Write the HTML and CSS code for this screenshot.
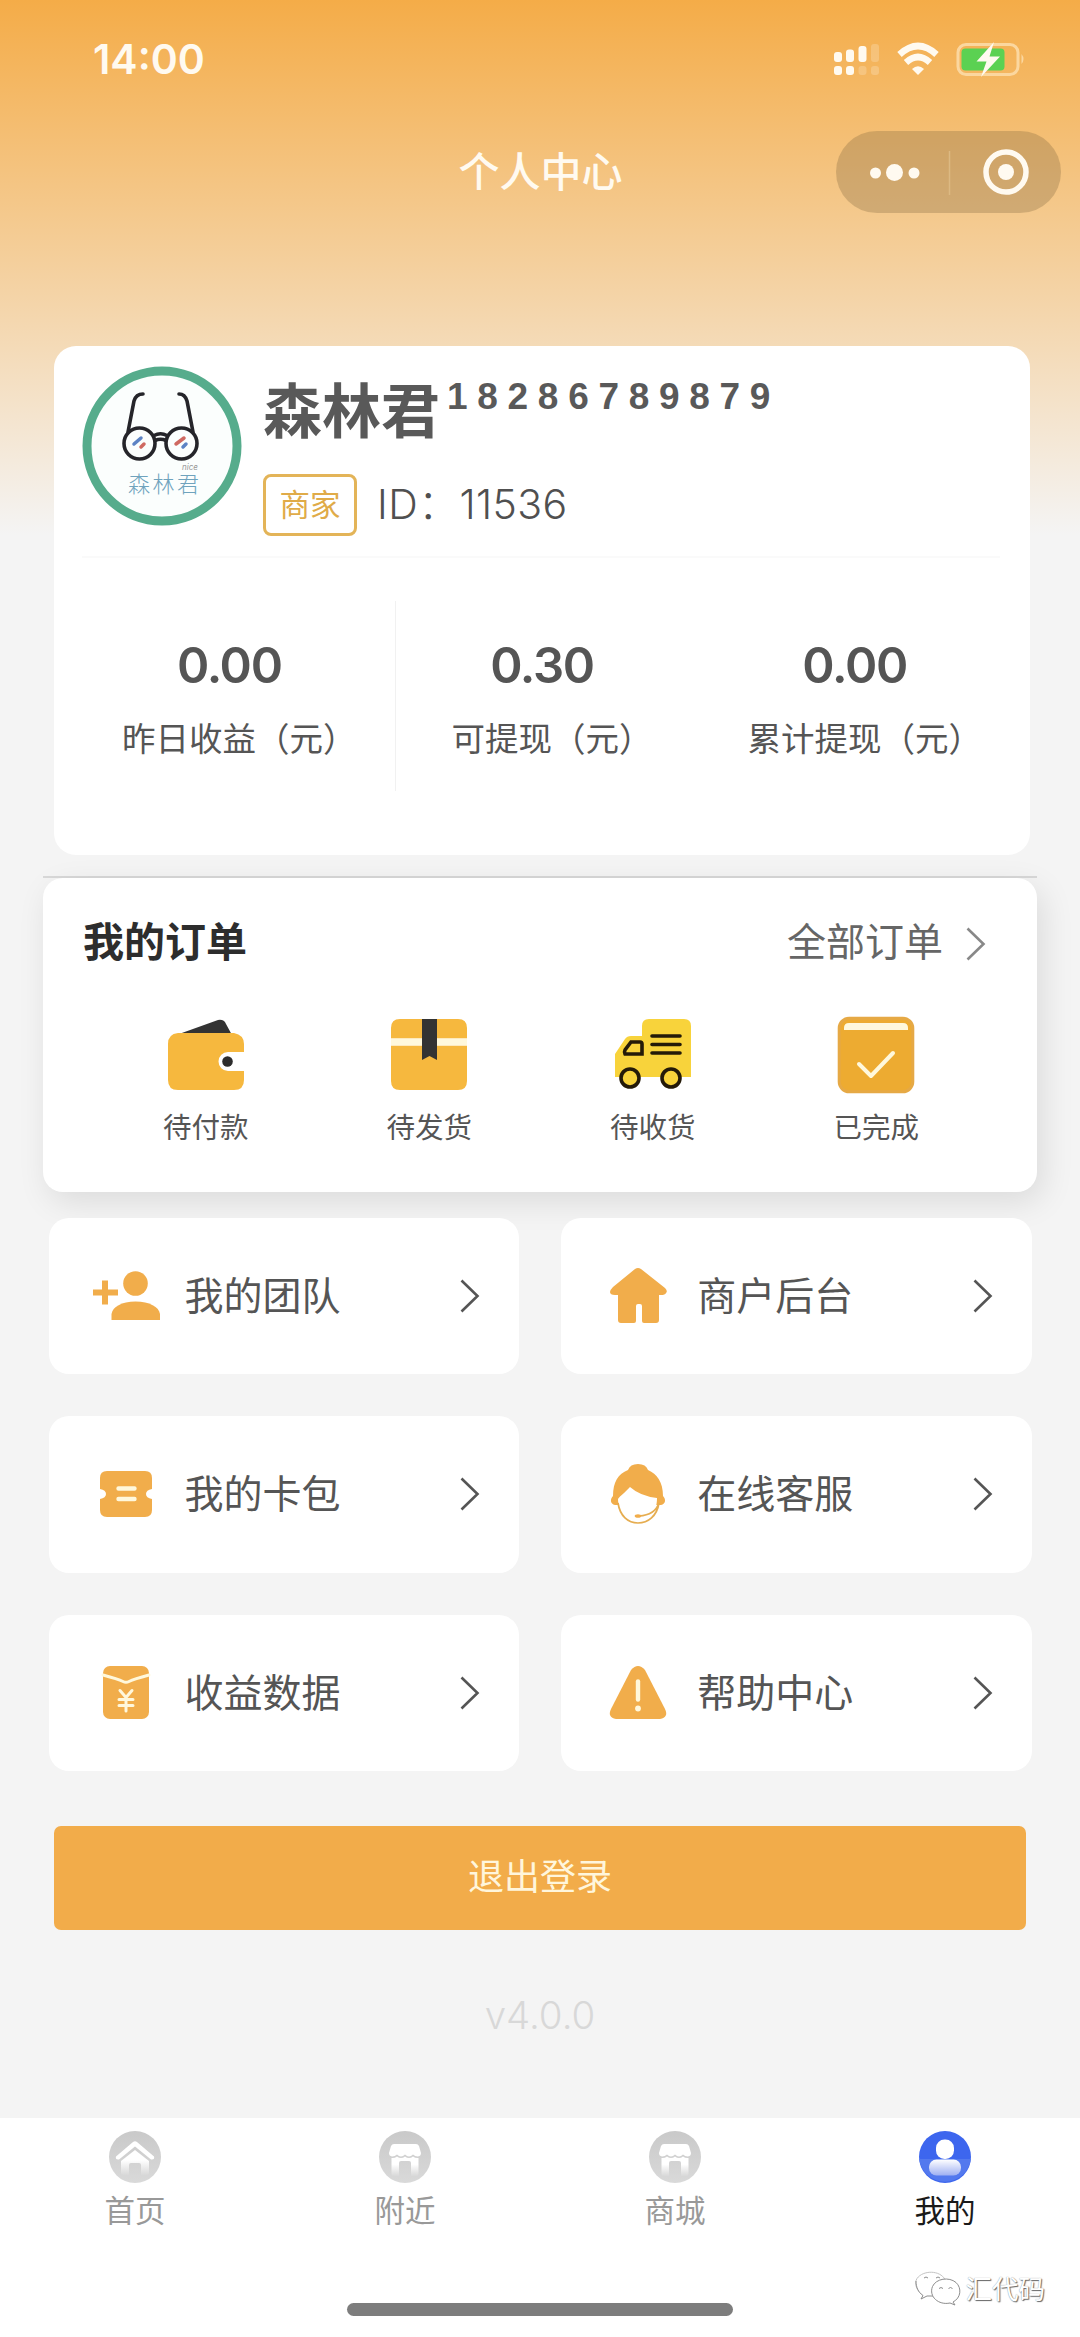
FILE: index.html
```html
<!DOCTYPE html>
<html lang="zh-CN">
<head>
<meta charset="utf-8">
<title>个人中心</title>
<link rel="stylesheet" href="styles.css">
</head>
<body>
<svg class="defs" width="0" height="0">
  <defs>
    <linearGradient id="gray" x1="0" y1="0" x2="0" y2="1"><stop offset="0" stop-color="#c9c9c9"/><stop offset="1" stop-color="#d9d9d9"/></linearGradient>
    <linearGradient id="fade" x1="0" y1="0" x2="0" y2="1"><stop offset="0.4" stop-color="#fff"/><stop offset="1" stop-color="#d8d8d8"/></linearGradient>
    <linearGradient id="bodyfade" x1="0" y1="0" x2="0" y2="1"><stop offset="0" stop-color="#fff"/><stop offset="1" stop-color="#9fb0f2"/></linearGradient>
    <symbol id="arrow" viewBox="0 0 20 34"><path d="M1.5 1.5 17.5 17 1.5 32.5" fill="none" stroke="currentColor" stroke-width="2.6"/></symbol>
    <symbol id="shop" viewBox="0 0 52 52">
      <circle cx="26" cy="26" r="26" fill="url(#gray)"/>
      <path d="M15 13h22q2 0 3 2l2 7q0 3-3 3.500-3 0-5-2-4 4-8 0-4 4-8 0-2 2-5 2-3-.5-3-3.500l2-7q1-2 3-2z" fill="#fff"/>
      <path d="M12.500 27q3 .5 5.500-1.500 4 3 8 0 4 3 8 0 2.500 2 5.500 1.500V43q0 2-2 2H32V32q0-2-2-2h-8q-2 0-2 2v13h-5.500q-2 0-2-2z" fill="url(#fade)"/>
    </symbol>
  </defs>
</svg>
<div class="page">
  <header class="status">
    <span class="time">14:00</span>
    <svg class="status-icons" width="192" height="36" viewBox="0 0 192 36">
      <g fill="#fffaf0">
        <rect x="1" y="11" width="8" height="10" rx="3"/><rect x="13" y="8.500" width="8" height="12.500" rx="3"/><rect x="25.500" y="5" width="8" height="16" rx="3"/>
        <rect x="1" y="25" width="8" height="9" rx="3"/><rect x="13" y="25" width="8" height="9" rx="3"/>
        <g opacity=".22"><rect x="38" y="3" width="8" height="18" rx="3"/><rect x="25.500" y="25" width="8" height="9" rx="3"/><rect x="38" y="25" width="8" height="9" rx="3"/></g>
        <path d="M85 34l-6-6q6-5.500 12 0z"/>
      </g>
      <path d="M66.500 13.500q18.500-17 37 0M73 21.500q12-11 24 0" fill="none" stroke="#fffaf0" stroke-width="6.500"/>
      <rect x="125" y="3.500" width="60" height="30" rx="8" fill="none" stroke="#fbd79f" stroke-width="3"/>
      <rect x="128.500" y="7.500" width="43" height="22" rx="4" fill="#5bd152"/>
      <path d="M188.500 13q4 5 0 10z" fill="#fbd79f"/>
      <path d="M161 1 143.500 20.500h10L148 36l19-20.500h-10.500z" fill="#fffaf0"/>
    </svg>
  </header>
  <nav class="nav">
    <h1 class="title">个人中心</h1>
    <div class="capsule">
      <svg width="225" height="82" viewBox="0 0 225 82">
        <g fill="#fffaf0"><circle cx="39.500" cy="42" r="5.500"/><circle cx="58.500" cy="41.500" r="8.500"/><circle cx="78" cy="42" r="5.500"/><circle cx="170" cy="41" r="8"/></g>
        <circle cx="170" cy="41" r="20" fill="none" stroke="#fffaf0" stroke-width="5.500"/>
        <path d="M113.500 20v44" stroke="#dcb983" stroke-width="1.500"/>
      </svg>
    </div>
  </nav>

  <section class="profile">
    <div class="user">
      <svg class="avatar" width="160" height="160" viewBox="0 0 160 160">
        <circle cx="80" cy="80" r="75" fill="#fbfefd" stroke="#56ac8c" stroke-width="9"/>
        <g fill="none" stroke="#25252a" stroke-width="3.600" stroke-linecap="round">
          <circle cx="57.500" cy="77.500" r="15.500"/><circle cx="99.500" cy="77.500" r="15.500"/>
          <path d="M72 69.500q6.500-3.500 13 0M73 74.500q5.500-2.500 11 0"/>
          <path d="M46 66 52 35q2-7 9-7M111 66l-6-31q-2-7-8-7"/>
        </g>
        <g fill="none" stroke-width="3.500" stroke-linecap="round"><path d="M52 78l7-6M101 81l3-3" stroke="#5c83c4"/><path d="M59 81l3-3M94 78l8-6" stroke="#cf6961"/></g>
        <text class="avatar-nice" x="100" y="104">nice</text>
        <text class="avatar-name" x="46" y="126">森林君</text>
      </svg>
      <div class="info">
        <div class="name">森林君<span class="phone">18286789879</span></div>
        <div class="meta"><span class="tag">商家</span><span class="uid">ID：11536</span></div>
      </div>
    </div>
    <div class="stats">
      <div class="stat"><b>0.00</b><span>昨日收益（元）</span></div>
      <div class="stat"><b>0.30</b><span>可提现（元）</span></div>
      <div class="stat"><b>0.00</b><span>累计提现（元）</span></div>
    </div>
  </section>

  <hr class="rule">
  <section class="orders">
    <div class="orders-head">
      <h2>我的订单</h2>
      <a class="all">全部订单<svg class="arrow" width="20" height="34"><use href="#arrow"/></svg></a>
    </div>
    <div class="order-list">
      <div class="order">
        <svg width="78" height="78" viewBox="0 0 78 78"><path d="M12 18 51 4q6-1 8 4l6 11z" fill="#333"/><path d="M11 17h56q10 2 10 11v8H61a9.500 9.500 0 0 0 0 19h16v9q0 10-10 10H11Q1 74 1 64V28q0-10 10-11z" fill="#f6b83e"/><circle cx="60.500" cy="45.500" r="5.300" fill="#2d2d2d"/></svg>
        <span>待付款</span>
      </div>
      <div class="order">
        <svg width="78" height="78" viewBox="0 0 78 78"><path d="M1 22.500V12q0-9 9-9h58q9 0 9 9v10.500zM1 29.500h76V65q0 9-9 9H10q-9 0-9-9z" fill="#f6b83e"/><path d="M1 22.500h76v7H1z" fill="#fff8dc"/><path d="M32 3h15v41l-7.500-4-7.500 4z" fill="#333"/></svg>
        <span>待发货</span>
      </div>
      <div class="order">
        <svg width="78" height="78" viewBox="0 0 78 78"><path d="M28 20V10q0-7 7-7h35q7 0 7 7v51H1V38l10-15q2-3 6-3z" fill="#f8d33b"/><g fill="none" stroke="#241a08" stroke-width="3.600" stroke-linecap="round"><path d="M38 20h28M38 28.500h28M38 37h28"/><path d="M17 26h9q2 0 2 2v10H11q-1-2 0-4z"/><circle cx="16" cy="62" r="9" fill="#f8d33b"/><circle cx="57" cy="62" r="9" fill="#f8d33b"/></g></svg>
        <span>待收货</span>
      </div>
      <div class="order">
        <svg width="78" height="78" viewBox="0 0 78 78"><rect x="2.200" y="2.200" width="73.600" height="73.600" rx="10" fill="#edab31" stroke="#e6a945" stroke-width="3"/><path d="M7 14V12q0-5 5-5h54q5 0 5 5v2z" fill="#fff8dc"/><path d="M22 48l12 12 22-23" fill="none" stroke="#fff8dc" stroke-width="4" stroke-linecap="round" stroke-linejoin="round"/></svg>
        <span>已完成</span>
      </div>
    </div>
  </section>

  <section class="menu">
    <a class="item">
      <svg class="icon" width="70" height="64" viewBox="0 0 70 64"><g fill="#f1ad4b"><circle cx="44.500" cy="19.500" r="12.300"/><path d="M20.500 56v-6c1-7 10-12.500 24-12.500S68 43 69 50v6z"/><path d="M11 16.500h6V25.500h10v6H17v9h-6v-9H2v-6h9z"/></g></svg>
      <span>我的团队</span><svg class="arrow" width="20" height="34"><use href="#arrow"/></svg>
    </a>
    <a class="item">
      <svg class="icon" width="70" height="64" viewBox="0 0 70 64"><path d="M32 5q3-2 6 0l24 19q3 3 1 5-1 2-5 2h-2v25q0 3-3 3H41q-2 0-2-2V42q0-2-2-2h-2q-2 0-2 2v15q0 2-2 2H18q-3 0-3-3V31h-3q-5 0-5-3 0-2 3-5z" fill="#f1ad4b"/></svg>
      <span>商户后台</span><svg class="arrow" width="20" height="34"><use href="#arrow"/></svg>
    </a>
    <a class="item">
      <svg class="icon" width="70" height="64" viewBox="0 0 70 64"><path d="M16 9h38q7 0 7 7v11q-6 1-6 5t6 5v11q0 7-7 7H16q-7 0-7-7V37q6-1 6-5t-6-5V16q0-7 7-7z" fill="#f1ad4b"/><path d="M27.500 26.500h16M27.500 37h16" stroke="#fff8dc" stroke-width="4.400" stroke-linecap="round"/></svg>
      <span>我的卡包</span><svg class="arrow" width="20" height="34"><use href="#arrow"/></svg>
    </a>
    <a class="item">
      <svg class="icon" width="70" height="64" viewBox="0 0 70 64"><path d="M25 8q2-6 10-6t10 6c9 4 15 12 15 26 3 3 3 8-2 9H12c-5-1-5-6-2-9C10 20 15 12 25 8z" fill="#f1ad4b"/><path d="M15 37q1-2 6-6l6-6q10 9 27 11C54 52 45 59 35 59S15 51 15 37z" fill="#fff"/><path d="M15 41c2 13 10 20 20 20s19-7 21-20q-4 12-20 13" fill="none" stroke="#e6ad50" stroke-width="1.700"/><ellipse cx="35" cy="54" rx="3.300" ry="1.800" fill="#f1ad4b"/></svg>
      <span>在线客服</span><svg class="arrow" width="20" height="34"><use href="#arrow"/></svg>
    </a>
    <a class="item">
      <svg class="icon" width="70" height="64" viewBox="0 0 70 64"><rect x="12" y="5" width="46" height="53" rx="7" fill="#f1ad4b"/><path d="M12 14q15 4 20 6.500 3 1.500 6 0Q43 18 58 14M29 29.500l6 7 6-7M28 38.500h14M28 44.500h14M35 37v13" fill="none" stroke="#fff8dc" stroke-width="3" stroke-linecap="round"/></svg>
      <span>收益数据</span><svg class="arrow" width="20" height="34"><use href="#arrow"/></svg>
    </a>
    <a class="item">
      <svg class="icon" width="70" height="64" viewBox="0 0 70 64"><path d="M28 9q7-8 14 0l20 39q4 8-5 10H13Q4 56 8 48z" fill="#f1ad4b"/><path d="M35 20.500v18" stroke="#fff8dc" stroke-width="4.400" stroke-linecap="round"/><circle cx="35" cy="47.500" r="2.900" fill="#fff8dc"/></svg>
      <span>帮助中心</span><svg class="arrow" width="20" height="34"><use href="#arrow"/></svg>
    </a>
  </section>

  <button class="logout">退出登录</button>
  <p class="version">v4.0.0</p>

  <footer class="tabbar">
    <div class="tabs">
      <a class="tab"><svg width="52" height="52" viewBox="0 0 52 52"><circle cx="26" cy="26" r="26" fill="url(#gray)"/><path d="M7 25.500 24 11q2-1.500 4 0l17 14.500q1 3.500-3 3L26 15.500 10 28.500q-4 .5-3-3z" fill="#fff"/><path d="M26 19l14 11v12q0 2-2 2h-6V34q0-2-2-2h-8q-2 0-2 2v10h-6q-2 0-2-2V30z" fill="url(#fade)"/></svg><span>首页</span></a>
      <a class="tab"><svg width="52" height="52"><use href="#shop"/></svg><span>附近</span></a>
      <a class="tab"><svg width="52" height="52"><use href="#shop"/></svg><span>商城</span></a>
      <a class="tab active"><svg width="52" height="52" viewBox="0 0 52 52"><circle cx="26" cy="26" r="26" fill="#3d66ee"/><path d="M.2 28h51.600a26 26 0 0 1-51.600 0z" fill="#5379ee"/><rect x="17" y="8.500" width="18" height="19.500" rx="8.500" fill="#fff"/><rect x="10" y="28.500" width="32" height="16" rx="7.500" fill="url(#bodyfade)"/></svg><span>我的</span></a>
    </div>
    <div class="home-bar"></div>
    <div class="watermark">
      <svg width="48" height="36" viewBox="0 0 48 36"><g fill="#fff" stroke="#8d8d8d" stroke-width="1"><path d="M9 24.500C2 19 0 12 3 7.500 9-1 26-1 31 8.500" stroke="#c4c4c4"/><path d="M2 10c0 6 2 11 7 14.500L7 28l6-3h6" /><path d="M39 31c8-4 9-14 3-19.500-7-6-20-4-23.500 4-4 10 6 19 17.500 16.500l5 2z"/><path d="M10 7q2-2 4 0M22 7q2-2 4 0M25 17.500q2-2 4 0M34.500 17.500q2-2 4 0" fill="none"/></g></svg>
      <span>汇代码</span>
    </div>
  </footer>
</div>
</body>
</html>
```
FILE: styles.css
```css
* { box-sizing: border-box; margin: 0; padding: 0; }
body { background: #f4f4f4; font-family: "Inter", "Noto Sans CJK SC", sans-serif; color: #555; }
svg { display: block; flex: none; }
.defs { position: absolute; }
.page {
  width: 1080px; height: 2337px; overflow: hidden;
  display: flex; flex-direction: column;
  background: linear-gradient(180deg, #f4ac48 0, #f4f4f4 535px);
}

.status { height: 118px; padding: 0 56px 0 93px; display: flex; align-items: center; justify-content: space-between; }
.time { font-size: 41px; font-weight: 600; color: #fffaf0; }
.status-icons { margin-right: -1px; }

.nav { height: 108px; padding-right: 19px; display: grid; grid-template-columns: 244px 1fr 225px; align-items: center; }
.title { grid-column: 2; padding-left: 1px; text-align: center; font-size: 41px; font-weight: 500; line-height: 60px; color: #fffaf0; }
.capsule { height: 82px; border-radius: 41px; background: rgba(120, 95, 60, 0.29); }

.profile { margin: 120px 50px 0 54px; height: 509px; border-radius: 22px; background: #fff; display: flex; flex-direction: column; }
.user { height: 212px; margin: 0 30px 0 28px; display: flex; border-bottom: 2px solid #fafafa; }
.avatar { margin-top: 20px; }
.avatar-name { font-family: "Noto Sans CJK SC", sans-serif; font-size: 22px; font-weight: 300; letter-spacing: 2.500px; fill: #6fa3bd; }
.avatar-nice { font-size: 8px; font-style: italic; fill: #999; }
.info { margin-left: 21px; padding-top: 26px; display: flex; flex-direction: column; }
.name { height: 80px; display: flex; font-size: 59px; line-height: 80px; font-weight: 700; color: #595959; }
.phone { margin: 3px 0 0 7px; font: 700 37px/44px "Liberation Sans", Arial, sans-serif; letter-spacing: 9.700px; }
.meta { margin-top: 22px; height: 62px; display: flex; align-items: center; }
.tag { width: 94px; height: 62px; border: 3px solid #e3b458; border-radius: 8px; text-align: center; font-size: 30.500px; line-height: 55px; color: #e0ab48; }
.uid { margin-left: 20px; font-size: 41px; line-height: 58px; padding-bottom: 2px; font-weight: 300; letter-spacing: 0.400px; color: #505050; }
.stats { flex: 1; padding: 43px 20px 64px 18px; display: grid; grid-template-columns: repeat(3, 1fr); }
.stat { position: relative; display: flex; flex-direction: column; align-items: center; }
.stat:first-child::after { content: ""; position: absolute; top: 0; right: -11px; width: 1px; height: 100%; background: #f1f1f1; }
.stat b { margin-top: 34px; padding-left: 2px; font-size: 49px; line-height: 62px; font-weight: 600; letter-spacing: -1.300px; }
.stat span { margin-top: 18px; padding-left: 22px; font-size: 33.500px; line-height: 48px; white-space: nowrap; }

.rule { margin: 21px 43px 0; height: 2px; border: 0; background: #d8d8d8; }
.orders { margin: 0 43px; height: 314px; border-radius: 20px; background: #fff; box-shadow: 6px 10px 32px rgba(0, 0, 0, 0.1); }
.orders-head { height: 132px; padding: 0 51px 4px 40px; display: flex; align-items: center; justify-content: space-between; }
.orders-head h2 { font-size: 41px; line-height: 60px; font-weight: 700; color: #2d2d2d; }
.all { display: flex; align-items: center; gap: 23px; font-size: 39px; line-height: 60px; color: #666; }
.all .arrow { color: #888; margin-top: 3px; }
.order-list { padding: 6px 49px 0 51px; display: grid; grid-template-columns: repeat(4, 1fr); }
.order { display: flex; flex-direction: column; align-items: center; gap: 13px; font-size: 28.500px; line-height: 42px; }

.menu { margin: 25.500px 48px 0 48.500px; display: grid; grid-template-columns: 1fr 1fr; grid-auto-rows: 156.500px; gap: 42px; }
.item { display: flex; align-items: center; padding: 0 39px 0 42px; border-radius: 20px; background: #fff; font-size: 39px; line-height: 60px; }
.item .icon { margin-right: 24px; }
.item .arrow { margin-left: auto; }

.logout { margin: 55px 54px 0; height: 104px; border: 0; border-radius: 7px; background: #f2ac4a; color: #fff6dc; font: 400 36px/60px "Noto Sans CJK SC", sans-serif; padding-bottom: 8px; }
.version { margin-top: 55px; text-align: center; font-size: 38.500px; line-height: 60px; font-weight: 300; color: #d8d8d8; }

.tabbar { position: relative; margin-top: auto; height: 219px; background: #fff; }
.tabs { padding-top: 13px; display: grid; grid-template-columns: repeat(4, 1fr); }
.tab { display: flex; flex-direction: column; align-items: center; gap: 7px; font-size: 30.500px; line-height: 42px; color: #999; }
.tab.active { color: #1a1a1a; }
.home-bar { width: 386px; height: 13px; margin: 71px auto 0; border-radius: 7px; background: #7d7d7d; }
.watermark { position: absolute; right: 35px; top: 151px; display: flex; align-items: center; gap: 4px; }
.watermark span { font-size: 26.500px; line-height: 40px; color: #fff; text-shadow: 1px 1px 1px #666, 0 0 1px #888; }
```
